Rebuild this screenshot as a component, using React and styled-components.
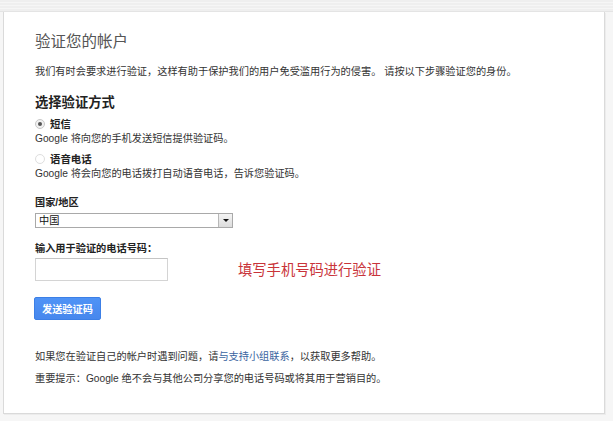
import React from "react";
import styled, { createGlobalStyle } from "styled-components";

const Global = createGlobalStyle`
  html, body { margin: 0; padding: 0; }
  body {
    background: #f6f6f6;
    font-family: "Liberation Sans", "Noto Sans CJK SC", sans-serif;
    color: #333;
    width: 613px;
    height: 421px;
    overflow: hidden;
  }
`;

const TopBar = styled.div`
  height: 12px;
  background: repeating-linear-gradient(
    to bottom,
    #efefef 0px,
    #efefef 2px,
    #f6f6f6 2px,
    #f6f6f6 3px
  );
  border-bottom: 1px solid #e4e4e4;
  box-sizing: border-box;
`;

const Card = styled.div`
  margin-left: 3px;
  width: 602px;
  height: 402px;
  box-sizing: border-box;
  background: #fff;
  border: 1px solid #dadada;
  border-top: none;
  box-shadow: 1px 1px 0 #ececec;
  padding: 20px 0 0 31px;
`;

const Title = styled.h1`
  margin: 0;
  font-size: 15.5px;
  line-height: 20px;
  font-weight: normal;
  color: #555;
`;

const Text = styled.p`
  margin: ${(p) => p.$mt || 0}px 0 0;
  font-size: 10.2px;
  line-height: ${(p) => p.$lh || 15}px;
  color: #333;
`;

const Link = styled.a`
  color: #3a64a0;
  text-decoration: none;
`;

const Heading = styled.h2`
  margin: 14px 0 0;
  font-size: 13.3px;
  line-height: 18px;
  font-weight: bold;
  color: #222;
`;

const RadioRow = styled.label`
  display: flex;
  align-items: center;
  gap: 5px;
  height: 15px;
  margin-top: ${(p) => p.$mt}px;
  font-size: 10.4px;
  font-weight: bold;
  color: #222;
`;

const Radio = styled.span`
  width: 10px;
  height: 10px;
  box-sizing: border-box;
  border-radius: 50%;
  border: 1px solid ${(p) => (p.$checked ? "#c8c8c8" : "#dedede")};
  background: ${(p) => (p.$checked ? "#f1f1f1" : "#fff")};
  display: flex;
  align-items: center;
  justify-content: center;
  &::after {
    content: "";
    display: ${(p) => (p.$checked ? "block" : "none")};
    width: 4px;
    height: 4px;
    border-radius: 50%;
    background: #555;
  }
`;

const Label = styled.div`
  margin-top: ${(p) => p.$mt}px;
  font-size: 10.2px;
  line-height: 15px;
  font-weight: bold;
  color: #222;
`;

const Select = styled.div`
  margin-top: 3px;
  width: 198px;
  height: 15px;
  box-sizing: border-box;
  border: 1px solid #a9a9a9;
  display: flex;
  align-items: stretch;
  background: #fff;
`;

const SelectValue = styled.span`
  flex: 1;
  font-size: 10.2px;
  line-height: 13px;
  padding-left: 3px;
  color: #111;
`;

const SelectArrow = styled.span`
  width: 13px;
  margin: 0;
  border-left: 1px solid #b8b8b8;
  background: linear-gradient(#f4f4f4, #dcdcdc);
  display: flex;
  align-items: center;
  justify-content: center;
  &::after {
    content: "";
    border-left: 3px solid transparent;
    border-right: 3px solid transparent;
    border-top: 3px solid #111;
  }
`;

const InputRow = styled.div`
  display: flex;
  align-items: center;
  gap: 70px;
  margin-top: 2px;
`;

const Input = styled.div`
  width: 133px;
  height: 23px;
  box-sizing: border-box;
  border: 1px solid #d4d4d4;
  border-top-color: #c4c4c4;
  background: #fff;
`;

const Hint = styled.span`
  font-size: 14.3px;
  line-height: 20px;
  color: #c9343a;
`;

const Button = styled.button`
  margin-top: 16px;
  margin-left: -1px;
  height: 23px;
  padding: 0 7px;
  border: 1px solid #3c7fe6;
  border-radius: 2px;
  background: linear-gradient(#4f93f6, #4787ed);
  color: #fff;
  font-family: "Liberation Sans", "Noto Sans CJK SC", sans-serif;
  font-size: 10.2px;
  font-weight: bold;
  display: block;
`;

export default function App() {
  return (
    <>
      <Global />
      <TopBar />
      <Card>
        <Title>验证您的帐户</Title>
        <Text $mt={12} $lh={16}>
          我们有时会要求进行验证，这样有助于保护我们的用户免受滥用行为的侵害。 请按以下步骤验证您的身份。
        </Text>
        <Heading>选择验证方式</Heading>
        <RadioRow $mt={4}>
          <Radio $checked />
          短信
        </RadioRow>
        <Text>Google 将向您的手机发送短信提供验证码。</Text>
        <RadioRow $mt={5}>
          <Radio />
          语音电话
        </RadioRow>
        <Text>Google 将会向您的电话拨打自动语音电话，告诉您验证码。</Text>
        <Label $mt={14}>国家/地区</Label>
        <Select>
          <SelectValue>中国</SelectValue>
          <SelectArrow />
        </Select>
        <Label $mt={13}>输入用于验证的电话号码：</Label>
        <InputRow>
          <Input />
          <Hint>填写手机号码进行验证</Hint>
        </InputRow>
        <Button>发送验证码</Button>
        <Text $mt={29} $lh={16}>
          如果您在验证自己的帐户时遇到问题，请<Link>与支持小组联系</Link>，以获取更多帮助。
        </Text>
        <Text $mt={6} $lh={16}>
          重要提示：Google 绝不会与其他公司分享您的电话号码或将其用于营销目的。
        </Text>
      </Card>
    </>
  );
}
